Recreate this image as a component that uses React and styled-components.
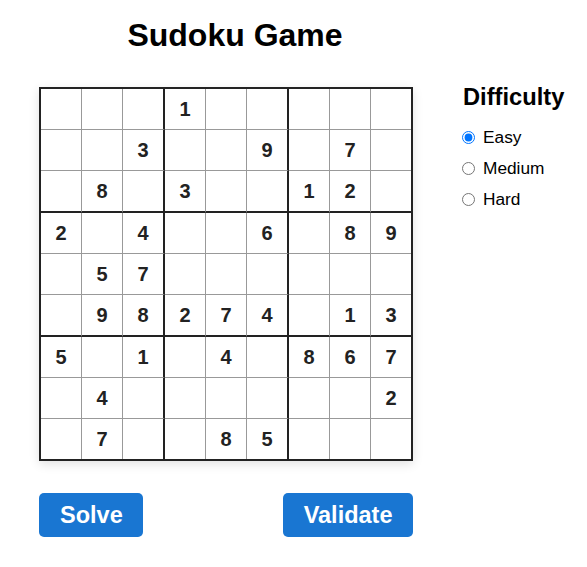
import React, { useState } from "react";
import styled, { createGlobalStyle } from "styled-components";

const GlobalStyle = createGlobalStyle`
  body {
    margin: 0;
    background: #fff;
    font-family: "Liberation Sans", Arial, sans-serif;
  }
`;

const puzzle = [
  [0, 0, 0, 1, 0, 0, 0, 0, 0],
  [0, 0, 3, 0, 0, 9, 0, 7, 0],
  [0, 8, 0, 3, 0, 0, 1, 2, 0],
  [2, 0, 4, 0, 0, 6, 0, 8, 9],
  [0, 5, 7, 0, 0, 0, 0, 0, 0],
  [0, 9, 8, 2, 7, 4, 0, 1, 3],
  [5, 0, 1, 0, 4, 0, 8, 6, 7],
  [0, 4, 0, 0, 0, 0, 0, 0, 2],
  [0, 7, 0, 0, 8, 5, 0, 0, 0],
];

const Page = styled.div`
  padding: 17px 0 30px 39px;
`;

const Title = styled.h1`
  width: 392px;
  margin: 0;
  font-size: 32px;
  line-height: 36px;
  font-weight: 700;
  text-align: center;
  color: #000;
`;

const GameRow = styled.div`
  display: flex;
  align-items: flex-start;
  gap: 49px;
  margin-top: 34px;
`;

const BoardColumn = styled.div`
  display: flex;
  flex-direction: column;
  width: 374px;
`;

const Board = styled.div`
  display: grid;
  grid-template-columns: repeat(9, auto);
  border: 2px solid #222;
  width: max-content;
  box-shadow: 0 3px 10px rgba(0, 0, 0, 0.12);
`;

const line = (i) =>
  i === 8 ? "none" : i % 3 === 2 ? "2px solid #222" : "1px solid #999";

const Cell = styled.div`
  width: 40px;
  height: 40px;
  box-sizing: content-box;
  display: flex;
  align-items: center;
  justify-content: center;
  border-right: ${({ $col }) => line($col)};
  border-bottom: ${({ $row }) => line($row)};
  font-size: 20px;
  font-weight: 700;
  color: #222;
  background: #fff;
`;

const Actions = styled.div`
  display: flex;
  justify-content: space-between;
  margin-top: 32px;
`;

const Button = styled.button`
  height: 44px;
  padding: 0 20.5px 0 21px;
  border: none;
  border-radius: 5px;
  background: #1976d2;
  color: #fff;
  font-family: inherit;
  font-size: 23.5px;
  font-weight: 700;
  cursor: pointer;
`;

const Sidebar = styled.div`
  display: flex;
  flex-direction: column;
  margin-top: -4px;
`;

const Heading = styled.h2`
  margin: 0 0 11px 1px;
  font-size: 23.7px;
  line-height: 28px;
  font-weight: 700;
  color: #000;
`;

const Option = styled.label`
  display: flex;
  align-items: center;
  gap: 8px;
  height: 31px;
  font-size: 17.3px;
  color: #000;
  cursor: pointer;

  input {
    margin: 0;
    width: 13px;
    height: 13px;
  }
`;

export default function App() {
  const [level, setLevel] = useState("easy");
  const levels = [
    ["easy", "Easy"],
    ["medium", "Medium"],
    ["hard", "Hard"],
  ];

  return (
    <Page>
      <GlobalStyle />
      <Title>Sudoku Game</Title>
      <GameRow>
        <BoardColumn>
          <Board>
            {puzzle.map((row, r) =>
              row.map((v, c) => (
                <Cell key={`${r}-${c}`} $row={r} $col={c}>
                  {v || ""}
                </Cell>
              ))
            )}
          </Board>
          <Actions>
            <Button>Solve</Button>
            <Button>Validate</Button>
          </Actions>
        </BoardColumn>
        <Sidebar>
          <Heading>Difficulty</Heading>
          {levels.map(([key, label]) => (
            <Option key={key}>
              <input
                type="radio"
                name="difficulty"
                checked={level === key}
                onChange={() => setLevel(key)}
              />
              {label}
            </Option>
          ))}
        </Sidebar>
      </GameRow>
    </Page>
  );
}
